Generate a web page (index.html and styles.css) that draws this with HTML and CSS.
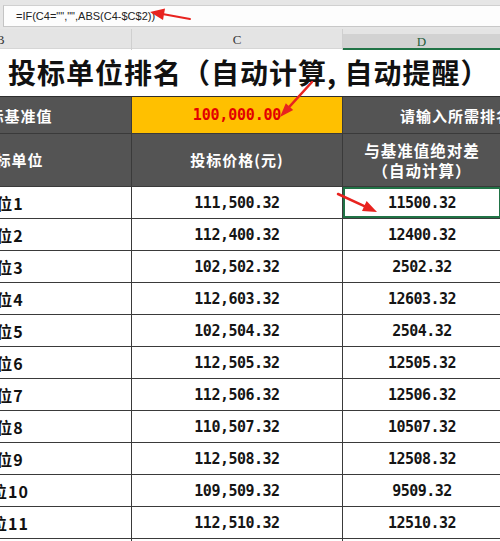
FILE: index.html
```html
<!DOCTYPE html>
<html lang="zh-CN">
<head>
<meta charset="utf-8">
<link rel="stylesheet" href="styles.css">
</head>
<body>
<div class="page">
  <div class="formula-bar">
    <div class="formula-box">=IF(C4="","",ABS(C4-$C$2))</div>
  </div>
  <div class="col-headers">
    <div class="ch ch-b">B</div>
    <div class="ch ch-c">C</div>
    <div class="ch ch-d">D</div>
  </div>
  <div class="title">投标单位排名（自动计算, 自动提醒）</div>
  <div class="grid">
    <div class="cell dark base-label">投标基准值</div>
    <div class="cell gold num red">100,000.00</div>
    <div class="cell dark hint">请输入所需排名的单位</div>

    <div class="cell dark head first">投标单位</div>
    <div class="cell dark head">投标价格(元)</div>
    <div class="cell dark head two">与基准值绝对差<br>（自动计算）</div>

    <div class="cell name">单位1</div><div class="cell num">111,500.32</div><div class="cell num sel">11500.32</div>
    <div class="cell name">单位2</div><div class="cell num">112,400.32</div><div class="cell num">12400.32</div>
    <div class="cell name">单位3</div><div class="cell num">102,502.32</div><div class="cell num">2502.32</div>
    <div class="cell name">单位4</div><div class="cell num">112,603.32</div><div class="cell num">12603.32</div>
    <div class="cell name">单位5</div><div class="cell num">102,504.32</div><div class="cell num">2504.32</div>
    <div class="cell name">单位6</div><div class="cell num">112,505.32</div><div class="cell num">12505.32</div>
    <div class="cell name">单位7</div><div class="cell num">112,506.32</div><div class="cell num">12506.32</div>
    <div class="cell name">单位8</div><div class="cell num">110,507.32</div><div class="cell num">10507.32</div>
    <div class="cell name">单位9</div><div class="cell num">112,508.32</div><div class="cell num">12508.32</div>
    <div class="cell name">单位10</div><div class="cell num">109,509.32</div><div class="cell num">9509.32</div>
    <div class="cell name">单位11</div><div class="cell num">112,510.32</div><div class="cell num">12510.32</div>
    <div class="cell name">单位12</div><div class="cell num">112,511.32</div><div class="cell num">12511.32</div>
  </div>
  <svg class="arrows" width="500" height="541" viewBox="0 0 500 541">
    <g fill="#e8231f" stroke="#e8231f" stroke-linecap="round">
      <line x1="190" y1="19" x2="163.8" y2="14.3" stroke-width="2"/>
      <polygon points="150,12 165,8.6 163,20" stroke="none"/>
      <line x1="312" y1="82" x2="289.5" y2="106.7" stroke-width="2.5"/>
      <polygon points="280,117 293.2,110.1 285.8,103.3" stroke="none"/>
      <line x1="338" y1="194" x2="364.3" y2="206.1" stroke-width="2.5"/>
      <polygon points="377,212 362,211.1 366.6,201.1" stroke="none"/>
    </g>
  </svg>
</div>
</body>
</html>
```

FILE: styles.css
```css
html, body {
  margin: 0;
  padding: 0;
  background: #ffffff;
  overflow: hidden;
}

.page {
  position: relative;
  width: 500px;
  height: 541px;
  overflow: hidden;
  font-family: "Noto Sans CJK SC", "Noto Sans", sans-serif;
}

.formula-bar {
  height: 29px;
  background: #e6e6e6;
  padding-top: 5px;
  box-sizing: border-box;
}

.formula-box {
  height: 22px;
  margin-left: 3px;
  background: #fdfdfd;
  border-left: 1px solid #c4c4c4;
  border-top: 1px solid #d0d0d0;
  border-bottom: 1px solid #c8c8c8;
  box-sizing: border-box;
  padding-left: 12px;
  font-family: "Liberation Sans", Arial, sans-serif;
  font-size: 11px;
  line-height: 20px;
  color: #222;
}

.col-headers {
  display: grid;
  grid-template-columns: 132px 211px 157px;
  height: 20px;
  background: #e4e4e4;
  border-bottom: 1px solid #d6d6d6;
  box-sizing: border-box;
  font-family: "Liberation Serif", "DejaVu Serif", serif;
  font-size: 13px;
  color: #3a3a3a;
}

.ch {
  display: flex;
  align-items: center;
  justify-content: center;
  line-height: 1;
}

.ch-b {
  justify-content: flex-start;
  margin-left: -4px;
  border-right: 1px solid #cfcfcf;
}

.ch-c {
  border-right: 1px solid #cfcfcf;
}

.ch-d {
  background: #d2d2d2;
  margin-top: 5px;
  border-bottom: 2px solid #217346;
  color: #1f5c3a;
  padding-top: 1px;
}

.title {
  height: 47px;
  box-sizing: border-box;
  padding-left: 8px;
  font-size: 28px;
  font-weight: 700;
  line-height: 47px;
  color: #111;
  white-space: nowrap;
  letter-spacing: 1px;
}

.grid {
  display: grid;
  grid-template-columns: 259px 210px 158px;
  grid-template-rows: 36px 52px;
  grid-auto-rows: 31px;
  gap: 1px;
  margin-left: -128px;
  width: 629px;
  background: #3a3a3a;
  border-top: 1px solid #2e2e2e;
}

.cell {
  display: flex;
  align-items: center;
  justify-content: center;
  background: #ffffff;
  white-space: nowrap;
  overflow: hidden;
  font-weight: 700;
  color: #111;
}

.dark {
  background: #545454;
  color: #ffffff;
  font-size: 15px;
  letter-spacing: 1px;
}

.gold {
  background: #ffc000;
}

.base-label {
  padding-left: 22px;
}

.hint {
  justify-content: flex-start;
  padding-left: 57px;
}

.head {
  line-height: 20px;
  text-align: center;
}

.first {
  padding-left: 20px;
}

.two {
  font-size: 15.5px;
}

.name {
  font-size: 16px;
  letter-spacing: 1px;
}

.num {
  font-family: "DejaVu Sans Mono", "Liberation Mono", monospace;
  font-size: 15px;
  letter-spacing: -0.5px;
  color: #151515;
}

.red {
  color: #e30000;
  letter-spacing: -0.2px;
}

.sel {
  box-shadow: inset 0 0 0 2px #217346;
}

.arrows {
  position: absolute;
  left: 0;
  top: 0;
  pointer-events: none;
}
```
